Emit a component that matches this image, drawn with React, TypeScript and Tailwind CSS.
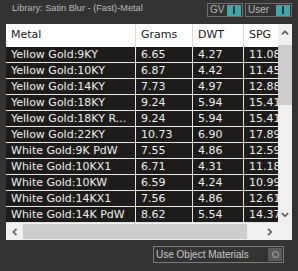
const rows = [
  ['Yellow Gold:9KY', '6.65', '4.27', '11.08'],
  ['Yellow Gold:10KY', '6.87', '4.42', '11.45'],
  ['Yellow Gold:14KY', '7.73', '4.97', '12.88'],
  ['Yellow Gold:18KY', '9.24', '5.94', '15.41'],
  ['Yellow Gold:18KY R...', '9.24', '5.94', '15.41'],
  ['Yellow Gold:22KY', '10.73', '6.90', '17.89'],
  ['White Gold:9K PdW', '7.55', '4.86', '12.59'],
  ['White Gold:10KX1', '6.71', '4.31', '11.18'],
  ['White Gold:10KW', '6.59', '4.24', '10.99'],
  ['White Gold:14KX1', '7.56', '4.86', '12.61'],
  ['White Gold:14K PdW', '8.62', '5.54', '14.37'],
];

const Chevron = ({ dir }: { dir: 'up' | 'down' | 'left' | 'right' }) => {
  const pts = {
    up: '0.8,4.5 4,1.3 7.2,4.5',
    down: '0.8,1 4,4.2 7.2,1',
    left: '4.5,0.8 1.3,4 4.5,7.2',
    right: '1,0.8 4.2,4 1,7.2',
  }[dir];
  const vertical = dir === 'up' || dir === 'down';
  return (
    <svg width={vertical ? 8 : 6} height={vertical ? 6 : 8} viewBox={vertical ? '0 0 8 6' : '0 0 6 8'}>
      <polyline points={pts} fill="none" stroke="#606060" strokeWidth="1.7" />
    </svg>
  );
};

const Toggle = ({ label, width }: { label: string; width: string }) => (
  <div className={`${width} h-[14px] border border-[#6e6e6e] flex items-center pl-[2px] pr-[1px]`}>
    <span className="text-[10px] leading-[12px] text-[#b8b8b8]">{label}</span>
    <div className="ml-auto w-[14px] h-[11px] bg-[#45a4a5] flex items-center justify-center">
      <div className="w-[2px] h-[8px] bg-[#173f40]" />
    </div>
  </div>
);

export default function App() {
  return (
    <div className="w-[298px] h-[271px] bg-[#333333] overflow-hidden font-['Liberation_Sans',sans-serif]">
      <div className="h-[24px] flex">
        <div className="ml-[12px] mt-[2px] text-[9.2px] leading-[12px] text-[#bdbdbd]">
          Library: Satin Blur - (Fast)-Metal
        </div>
        <div className="ml-auto mr-[6px] mt-[3px] flex gap-[2px]">
          <Toggle label="GV" width="w-[36px]" />
          <Toggle label="User" width="w-[47px]" />
        </div>
      </div>

      <div className="ml-[6px] w-[286px] h-[216px] flex flex-col bg-[#f0f0f0]">
        <div className="flex h-[199px]">
          <div className="w-[272px] overflow-hidden font-['DejaVu_Sans',sans-serif] text-[11px]">
            <div className="h-[23px] bg-white grid grid-cols-[130px_57px_51px_34px] text-[#1a1a1a]">
              <div className="flex items-center pl-[5px] border-r border-[#dcdcdc]">Metal</div>
              <div className="flex items-center pl-[5px] border-r border-[#dcdcdc]">Grams</div>
              <div className="flex items-center pl-[5px] border-r border-[#dcdcdc]">DWT</div>
              <div className="flex items-center pl-[5px]">SPG</div>
            </div>
            {rows.map((r) => (
              <div
                key={r[0]}
                className="h-[16px] bg-[#1e1c1a] border-b border-[#e6e6e6] grid grid-cols-[130px_57px_51px_34px] text-[#eeeeee] leading-[15px]"
              >
                <div className="pl-[5px] border-r border-[#e6e6e6] whitespace-nowrap overflow-hidden">{r[0]}</div>
                <div className="pl-[5px] border-r border-[#e6e6e6] whitespace-nowrap overflow-hidden">{r[1]}</div>
                <div className="pl-[5px] border-r border-[#e6e6e6] whitespace-nowrap overflow-hidden">{r[2]}</div>
                <div className="pl-[5px] whitespace-nowrap overflow-hidden">{r[3]}</div>
              </div>
            ))}
          </div>
          <div className="w-[14px] flex flex-col bg-[#f0f0f0]">
            <div className="h-[17px] flex items-center justify-center">
              <Chevron dir="up" />
            </div>
            <div className="h-[60px] mt-[4px] bg-[#cdcdcd]" />
            <div className="flex-1" />
            <div className="h-[17px] flex items-center justify-center">
              <Chevron dir="down" />
            </div>
          </div>
        </div>
        <div className="h-[17px] flex bg-[#f0f0f0]">
          <div className="w-[17px] flex items-center justify-center">
            <Chevron dir="left" />
          </div>
          <div className="w-[224px] h-[15px] mt-[1px] bg-[#cdcdcd]" />
          <div className="flex-1" />
          <div className="w-[17px] flex items-center justify-center">
            <Chevron dir="right" />
          </div>
          <div className="w-[14px]" />
        </div>
      </div>

      <div className="mt-[6px] ml-[153px] w-[131px] h-[17px] border border-[#7c7c7c] flex items-center">
        <span className="pl-[2px] text-[10px] leading-[12px] text-[#c8c8c8]">Use Object Materials</span>
        <div className="ml-auto mr-[1px] w-[14px] h-[13px] bg-[#5a5a5a] flex items-center justify-center">
          <div className="w-[7px] h-[7px] rounded-full border border-[#b0b0b0]" />
        </div>
      </div>
    </div>
  );
}
